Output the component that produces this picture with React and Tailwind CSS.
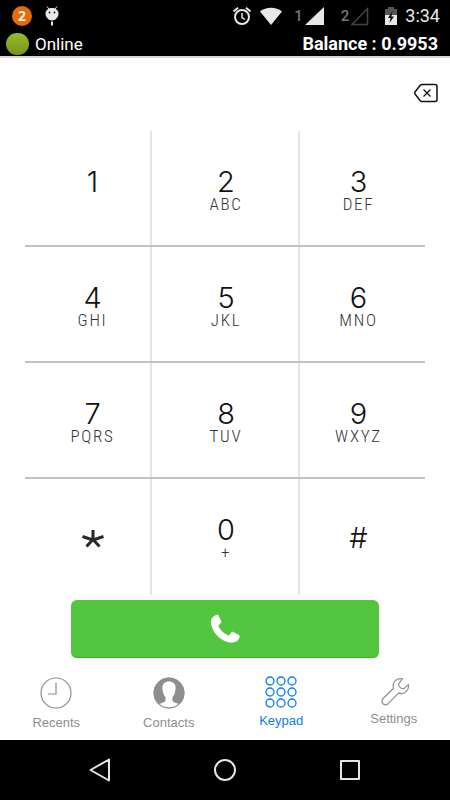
const keys = [
  [['1', ''], ['2', 'ABC'], ['3', 'DEF']],
  [['4', 'GHI'], ['5', 'JKL'], ['6', 'MNO']],
  [['7', 'PQRS'], ['8', 'TUV'], ['9', 'WXYZ']],
  [['*', ''], ['0', '+'], ['#', '']],
];

const columnStyles = [
  'border-r-2 pl-[10px]',
  'border-r-2 pl-[2px]',
  'pr-2',
];

function Star() {
  return (
    <svg className="mt-3 h-6 w-6" viewBox="0 0 24 24" fill="none" stroke="#2a2a2a" strokeWidth="3" aria-hidden="true">
      <path d="M12 2v10M1.500 8.500 12 12M22.500 8.500 12 12M5.500 18.500 12 11.500l6.500 7" />
    </svg>
  );
}

function Key({ digit, letters, column }) {
  return (
    <button
      type="button"
      aria-label={letters ? `${digit} ${letters}` : digit}
      className={`flex flex-col items-center border-[#e4e4e4] pt-[37px] ${columnStyles[column]}`}
    >
      {digit === '*' ? (
        <Star />
      ) : (
        <span className={`font-[Inter,sans-serif] text-[29px] leading-7 font-light text-[#111] ${digit === '#' ? 'pt-2' : ''}`}>
          {digit}
        </span>
      )}
      {letters && (
        <span className="font-['Roboto_Condensed',Roboto,sans-serif] text-[17px] leading-4 font-light tracking-widest text-[#333]">
          {letters}
        </span>
      )}
    </button>
  );
}

function StatusBar() {
  return (
    <div className="flex h-8 items-center justify-between pr-[10px] pl-3">
      <div className="flex items-center gap-3">
        <span className="flex h-5 w-5 items-center justify-center rounded-full bg-[#e86c05] font-['Open_Sans',sans-serif] text-sm font-bold text-[#eee]">2</span>
        <svg className="h-5 w-4" viewBox="0 0 16 20" aria-hidden="true">
          <path d="M3 .5 5 3M13 .5 11 3" stroke="#e8e8e8" strokeWidth="1" />
          <path d="M1.500 7.500C1.500 4.500 4 2 8 2s6.500 2.500 6.500 5.500C14.500 11 11.500 14.500 8 14.500S1.500 11 1.500 7.500Z" fill="#e8e8e8" />
          <path d="M8 15.500V19.500" stroke="#e8e8e8" strokeWidth="2" />
          <circle cx="5.500" cy="6.500" r=".9" fill="#111" />
          <circle cx="10.500" cy="6.500" r=".9" fill="#111" />
        </svg>
      </div>
      <div className="flex items-center text-[#e8e8e8]">
        <svg className="h-5 w-5" viewBox="0 0 20 20" fill="none" stroke="currentColor" aria-hidden="true">
          <circle cx="10" cy="11" r="7" strokeWidth="2" />
          <path d="M10 7v4.500l3 2" strokeWidth="1.500" />
          <path d="M1.500 5.500 6 1.800M18.500 5.500 14 1.800" strokeWidth="2" />
        </svg>
        <svg className="ml-2 h-5 w-[22px]" viewBox="0 0 22 20" fill="currentColor" aria-hidden="true">
          <path d="M0 5.500C3 3 7 1.800 11 1.800S19 3 22 5.500L11 19Z" />
        </svg>
        <span className="ml-3 font-[Roboto,sans-serif] text-[15px] leading-5 font-medium text-[#777]">1</span>
        <svg className="ml-[2px] h-5 w-5" viewBox="0 0 20 20" fill="currentColor" aria-hidden="true">
          <path d="M19 1v18H0Z" />
        </svg>
        <span className="ml-4 font-[Roboto,sans-serif] text-[15px] leading-5 font-medium text-[#777]">2</span>
        <svg className="ml-[2px] h-5 w-5" viewBox="0 0 20 20" fill="none" stroke="#444" strokeWidth="1.500" aria-hidden="true">
          <path d="M16.500 2.500v16H1Z" />
        </svg>
        <svg className="ml-[14px] h-5 w-3" viewBox="0 0 12 20" aria-hidden="true">
          <path d="M3 1h6v2h3v6H0V3h3Z" fill="#555" />
          <path d="M0 9h12v10H0Z" fill="#e8e8e8" />
          <path d="M7.500 5 3 12h2.500L4.500 17 9 10.500H6.500Z" fill="#111" />
        </svg>
        <time className="ml-2 font-[Roboto,sans-serif] text-lg leading-5">3:34</time>
      </div>
    </div>
  );
}

function RecentsIcon() {
  return (
    <svg className="h-8 w-8" viewBox="0 0 32 32" fill="none" stroke="#8e8e8e" strokeWidth="1.200" aria-hidden="true">
      <circle cx="16" cy="16" r="15" />
      <path d="M16 5.500V17H8" />
    </svg>
  );
}

function ContactsIcon() {
  return (
    <svg className="h-8 w-8" viewBox="0 0 32 32" aria-hidden="true">
      <circle cx="16" cy="16" r="15.500" fill="#8e8e8e" />
      <path d="M16 4.500c-4.500 0-6.800 2.800-6.600 6.500 0 1.500.2 2.200.5 3.300.4 3.200 1.300 4.300 2.600 5.900v3.500c-1 2-4.500 2.400-6.500 3.600A15 15 0 0 0 26 27.300c-2-1.200-5.500-1.600-6.500-3.600v-3.500c1.300-1.600 2.200-2.700 2.600-5.900.3-1.100.5-1.800.5-3.300.2-3.700-2.100-6.500-6.600-6.500Z" fill="#fff" />
      <circle cx="16" cy="16" r="15" fill="none" stroke="#8e8e8e" />
    </svg>
  );
}

function KeypadIcon() {
  return (
    <svg className="h-8 w-8" viewBox="0 0 32 32" fill="none" stroke="#0b7cf5" strokeWidth="1.300" aria-hidden="true">
      {[5, 16, 27].map((y) => [5, 16, 27].map((x) => <circle key={`${x}-${y}`} cx={x} cy={y} r="4" />))}
    </svg>
  );
}

function SettingsIcon() {
  return (
    <svg className="h-8 w-8" viewBox="-1 -2 32 32" fill="none" stroke="#8e8e8e" strokeWidth="1.200" strokeLinejoin="round" aria-hidden="true">
      <path d="M23.500 2.800c-3.500-.8-7.500.8-8.900 4.200-.7 1.900-.5 3.600 0 5.200L4 22.500c-1.600 1.700-1.300 4.100 0 5.300 1.500 1.400 3.700 1.300 5.200-.1l10.300-10.600c2.900 1 6.100.3 8.100-1.900 1.700-1.900 2.200-4.200 1.800-6.600l-4.500 4c-2.700.4-5.200-1.500-5.500-4.500Z" />
    </svg>
  );
}

const tabs = [
  { name: 'Recents', Icon: RecentsIcon, style: 'gap-1 pt-[5px] text-[#8e8e8e]' },
  { name: 'Contacts', Icon: ContactsIcon, style: 'gap-1 pt-[5px] text-[#8e8e8e]' },
  { name: 'Keypad', Icon: KeypadIcon, style: 'gap-[3px] pt-1 text-[#0b7cf5]' },
  { name: 'Settings', Icon: SettingsIcon, style: 'gap-[3px] pt-[2px] text-[#8e8e8e]' },
];

export default function App() {
  return (
    <div className="flex min-h-screen flex-col bg-white">
      <header className="border-b-2 border-[#d8d8d8] bg-black text-white">
        <StatusBar />
        <div className="flex h-6 items-center justify-between pr-3 pl-[6px] font-[Roboto,sans-serif] leading-6">
          <div className="flex items-center gap-[6px] text-[17px]">
            <span className="h-[22px] w-[23px] rounded-full bg-linear-to-b from-[#98bd27] to-[#789322]" />
            <span>Online</span>
          </div>
          <span className="text-lg leading-6 font-bold">Balance : 0.9953</span>
        </div>
      </header>

      <main className="flex flex-1 flex-col">
        <div className="flex h-[73px] items-center justify-end pr-3">
          <button type="button" aria-label="Delete" className="pb-1">
            <svg className="block h-5 w-6" viewBox="0 0 24 20" fill="none" stroke="#111" aria-hidden="true">
              <path d="M8 1.500h13q2 0 2 2v13q0 2-2 2H8q-1 0-2-1L1 11q-.8-1 0-2l5-6.500q1-1 2-1Z" strokeWidth="1.500" />
              <path d="m9.500 6.500 7 7M16.500 6.500l-7 7" strokeWidth="1.200" />
            </svg>
          </button>
        </div>

        <div className="mx-[25px] divide-y-2 divide-[#c2c2c2]">
          {keys.map((row) => (
            <div key={row[0][0]} className="grid h-[116px] grid-cols-[127fr_148fr_125fr]">
              {row.map(([digit, letters], column) => (
                <Key key={digit} digit={digit} letters={letters} column={column} />
              ))}
            </div>
          ))}
        </div>

        <button type="button" aria-label="Call" className="mx-[71px] mt-[5px] flex h-[58px] items-center justify-center rounded-md border-b border-[#36b818] bg-[#52c63e]">
          <svg className="h-8 w-8" viewBox="0 0 32 32" fill="#fff" aria-hidden="true">
            <path d="M8.500 1.500C5 2.300 2 5 2 9c0 10 11 20.500 20.500 20.500 4 0 7-2 8-5 .3-1.200.2-1.800-.8-2.400L24.500 19c-1-.6-1.700-.4-2.300.4l-2.300 3C15 21 10.500 16.500 9.300 12.500l2.500-2.300c.8-.7.9-1.300.4-2.200L9.500 2.500c-.3-.7-.4-1-1-1Z" />
          </svg>
        </button>

        <nav className="mt-auto grid h-[68px] grid-cols-4">
          {tabs.map(({ name, Icon, style }) => (
            <button key={name} type="button" className={`flex flex-col items-center font-['Liberation_Sans',sans-serif] text-[13px] leading-5 ${style}`}>
              <Icon />
              {name}
            </button>
          ))}
        </nav>
      </main>

      <footer className="flex h-[60px] items-center justify-center gap-[101px] bg-black">
        <button type="button" aria-label="Back">
          <svg className="h-6 w-6" viewBox="0 0 24 24" fill="none" stroke="#e4e4e4" strokeWidth="2" strokeLinejoin="round" aria-hidden="true">
            <path d="M21 1.500v21L2.500 12Z" />
          </svg>
        </button>
        <button type="button" aria-label="Home">
          <svg className="h-6 w-6" viewBox="0 0 24 24" fill="none" stroke="#e4e4e4" strokeWidth="2" aria-hidden="true">
            <circle cx="12" cy="12" r="10" />
          </svg>
        </button>
        <button type="button" aria-label="Overview">
          <svg className="h-6 w-6" viewBox="0 0 24 24" fill="none" stroke="#e4e4e4" strokeWidth="2" strokeLinejoin="round" aria-hidden="true">
            <path d="M3 3h18v18H3Z" />
          </svg>
        </button>
      </footer>
    </div>
  );
}
